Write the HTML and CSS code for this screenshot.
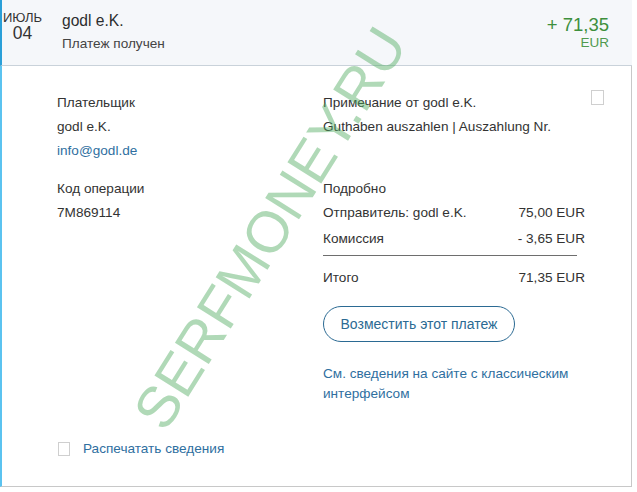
FILE: index.html
```html
<!DOCTYPE html>
<html lang="ru">
<head>
<meta charset="utf-8">
<title>Платеж</title>
<link rel="stylesheet" href="styles.css">
</head>
<body>
<div class="card">
  <div class="head">
    <div class="date">
      <div class="month">ИЮЛЬ</div>
      <div class="day">04</div>
    </div>
    <div class="who">
      <div class="name">godl e.K.</div>
      <div class="status">Платеж получен</div>
    </div>
    <div class="amount">
      <div class="sum">+ 71,35</div>
      <div class="cur">EUR</div>
    </div>
  </div>
  <div class="body">
    <div class="grid">
      <div class="sec">
        <div class="line">Плательщик</div>
        <div class="line">godl e.K.</div>
        <a class="line link" href="#">info@godl.de</a>
      </div>
      <div class="sec">
        <div class="line">Примечание от godl e.K.</div>
        <div class="line">Guthaben auszahlen | Auszahlung Nr.</div>
      </div>
      <div class="box top-box"></div>
      <div class="sec">
        <div class="line">Код операции</div>
        <div class="line">7M869114</div>
      </div>
      <div class="sec">
        <div class="line">Подробно</div>
        <div class="line row"><span>Отправитель: godl e.K.</span><span>75,00 EUR</span></div>
        <div class="line row fee"><span>Комиссия</span><span>- 3,65 EUR</span></div>
        <div class="sep"></div>
        <div class="line row total"><span>Итого</span><span>71,35 EUR</span></div>
        <button class="btn" type="button">Возместить этот платеж</button>
        <a class="classic link" href="#">См. сведения на сайте с классическим интерфейсом</a>
      </div>
    </div>
    <div class="print">
      <span class="box small-box"></span>
      <a class="link" href="#">Распечатать сведения</a>
    </div>
  </div>
  <div class="mark">SERFMONEY.RU</div>
</div>
</body>
</html>
```

FILE: styles.css
```css
* { box-sizing: border-box; }
html, body { margin: 0; padding: 0; background: #fff; }
body {
  font-family: "Liberation Sans", Arial, sans-serif;
  color: #333;
  font-size: 13.6px;
}
.card {
  width: 632px;
  position: relative;
  overflow: hidden;
}
.head {
  height: 66px;
  background: #f5f7fa;
  border-left: 2px solid #2a9fd8;
  border-bottom: 1px solid #c9d2da;
  display: flex;
  align-items: flex-start;
}
.date {
  width: 41px;
  text-align: center;
  padding-top: 11px;
  color: #333;
}
.month { font-size: 13px; line-height: 13px; }
.day { font-size: 17.5px; line-height: 17px; margin-top: 1px; }
.who {
  margin-left: 19px;
  padding-top: 12px;
  flex: 1;
}
.name { font-size: 15.6px; line-height: 18px; color: #2c2e2f; }
.status { font-size: 13.6px; line-height: 18px; margin-top: 5px; color: #444; }
.amount {
  padding-top: 15px;
  padding-right: 23px;
  text-align: right;
  color: #3d8f3d;
}
.sum { font-size: 18.5px; line-height: 20px; }
.cur { font-size: 13.5px; line-height: 15px; color: #4f9a4f; }

.body {
  height: 421px;
  border-left: 2px solid #5bc3f0;
  border-right: 1px solid #c8c8c8;
  border-bottom: 1px solid #c8c8c8;
  padding: 25px 0 0 55px;
}
.grid {
  display: grid;
  grid-template-columns: 266px 262px 19px;
  row-gap: 14px;
  align-items: start;
}
.sec { display: flex; flex-direction: column; align-items: flex-start; }
.line { line-height: 24px; white-space: nowrap; }
.link { color: #2f6f9f; text-decoration: none; }
.row { display: flex; justify-content: space-between; width: 262px; }
.fee { margin-top: 2px; padding-bottom: 4px; }
.sep { width: 254px; height: 1px; background: #6e6e6e; }
.total { margin-top: 10px; }
.btn {
  margin-top: 16px;
  width: 192px;
  height: 36px;
  border: 1px solid #2b6a93;
  border-radius: 18px;
  background: #fff;
  color: #2b6a93;
  font-family: "Liberation Sans", Arial, sans-serif;
  font-size: 14px;
  padding: 0;
}
.classic {
  margin-top: 22px;
  line-height: 20px;
  width: 262px;
}
.box {
  display: block;
  border: 1px solid #cfcfcf;
  background: #fff;
}
.top-box {
  width: 13px;
  height: 15px;
  margin-left: 6px;
  margin-top: -1px;
}
.print {
  margin-top: 36px;
  display: flex;
  align-items: center;
  line-height: 18px;
  padding-left: 1px;
}
.small-box { width: 12px; height: 14px; margin-right: 13px; margin-top: -1px; }
.mark {
  position: absolute;
  left: 270px;
  top: 228px;
  transform: translate(-50%, -50%) rotate(-58deg);
  font-family: "Liberation Sans", Arial, sans-serif;
  font-size: 58px;
  line-height: 1;
  white-space: nowrap;
  color: rgba(80, 170, 95, 0.45);
  pointer-events: none;
}
```
